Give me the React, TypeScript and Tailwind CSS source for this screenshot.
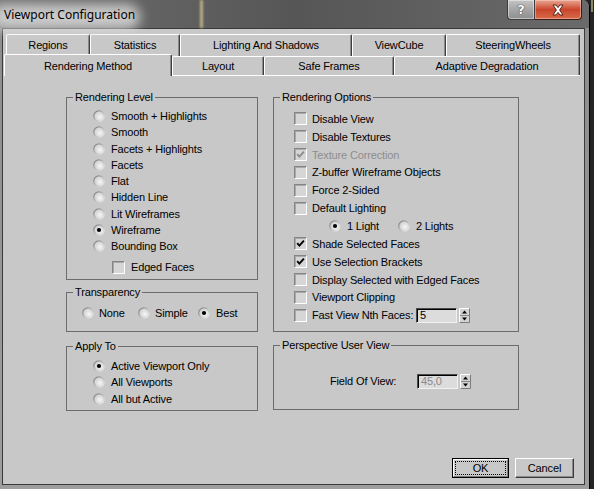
import React from 'react';

function Radio({ checked = false }: { checked?: boolean }) {
  return (
    <svg width="12" height="12" viewBox="0 0 12 12" className="shrink-0">
      <defs>
        <linearGradient id="rb" x1="0" y1="0" x2="1" y2="1">
          <stop offset="0" stopColor="#6e6e6e" />
          <stop offset="1" stopColor="#ffffff" />
        </linearGradient>
        <radialGradient id="rf" cx="0.6" cy="0.6" r="0.65">
          <stop offset="0" stopColor="#f6f6f6" />
          <stop offset="1" stopColor="#cdcdcd" />
        </radialGradient>
      </defs>
      <circle cx="6" cy="6" r="5.8" fill="url(#rb)" />
      <circle cx="6" cy="6" r="4.6" fill="url(#rf)" />
      {checked && <circle cx="6" cy="6" r="2.1" fill="#000" />}
    </svg>
  );
}

function Check({ checked = false, disabled = false }: { checked?: boolean; disabled?: boolean }) {
  return (
    <span className="w-[13px] h-[13px] shrink-0 flex items-center justify-center border border-t-[#858585] border-l-[#858585] border-b-white border-r-white bg-[#d6d6d6] shadow-[inset_1px_1px_0_#a9a9a9]">
      {checked && (
        <svg width="9" height="9" viewBox="0 0 9 9">
          <path d="M1.2 4.2 L3.4 6.6 L7.9 1.6" stroke={disabled ? '#8c8c8c' : '#000'} strokeWidth="1.9" fill="none" />
        </svg>
      )}
    </span>
  );
}

function Spinner() {
  return (
    <svg width="11" height="15" viewBox="0 0 11 15" className="shrink-0">
      <rect x="0" y="0" width="11" height="15" fill="#d2d2d2" />
      <path d="M0.5 14.5 V0.5 H10.5" stroke="#fff" fill="none" />
      <path d="M0.5 14.5 H10.5 V0.5" stroke="#7c7c7c" fill="none" />
      <path d="M1 7.5 H10" stroke="#8a8a8a" />
      <polygon points="3,5.5 8,5.5 5.5,2.5" fill="#000" />
      <polygon points="3,9.5 8,9.5 5.5,12.5" fill="#000" />
    </svg>
  );
}

function Edit({ value, disabled = false }: { value: string; disabled?: boolean }) {
  return (
    <span
      className={`w-[41px] h-[15px] shrink-0 flex items-center pl-[3px] border border-t-[#4a4a4a] border-l-[#4a4a4a] border-b-[#f2f2f2] border-r-[#f2f2f2] shadow-[inset_1px_1px_0_#000] bg-[#dcdcdc] leading-[13px] ${disabled ? 'text-[#8a8a8a]' : 'text-black'}`}
    >
      {value}
    </span>
  );
}

function Group({ title, className, children }: { title: string; className: string; children?: React.ReactNode }) {
  return (
    <div className={`relative border border-[#6c6c6c] ${className}`}>
      <span className="absolute -top-[8px] left-[6px] px-[2px] bg-[#c8c8c8] leading-[14px]">{title}</span>
      {children}
    </div>
  );
}

function RadioRow({ label, checked = false }: { label: string; checked?: boolean }) {
  return (
    <div className="flex items-center h-[16.25px] gap-[6px]">
      <Radio checked={checked} />
      <span>{label}</span>
    </div>
  );
}

function CheckRow({ label, checked = false, disabled = false }: { label: string; checked?: boolean; disabled?: boolean }) {
  return (
    <div className="flex items-center h-[17.85px] gap-[5px]">
      <Check checked={checked} disabled={disabled} />
      <span className={disabled ? 'text-[#8d8d8d]' : ''}>{label}</span>
    </div>
  );
}

export default function App() {
  return (
    <div className="relative w-[594px] h-[489px] overflow-hidden bg-[#242424] font-['Liberation_Sans',Arial,sans-serif] text-[11px] leading-[14px] tracking-[-0.15px] text-black">
      {/* background glimpse at the right edge */}
      <div className="absolute right-[1px] top-0 w-[2px] h-[12px] bg-[#b8b27a]/70" />

      <div className="w-[590px] h-[489px] flex flex-col rounded-tr-[7px] overflow-hidden border-r border-black bg-gradient-to-b from-[#8c8c8c] to-[#9e9e9e]">
        {/* Title bar */}
        <div className="relative h-[28px] shrink-0 bg-gradient-to-r from-[#707070] via-[#565656] to-[#6a6a6a]">
          <div className="absolute -left-[10px] top-[4px] w-[150px] h-[26px] rounded-full bg-[#dadada]/85 blur-[6px]" />
          <div className="absolute left-[200px] top-0 w-[3px] h-[28px] bg-[#cfc78c]/80 blur-[1px]" />
          <span className="relative block pl-[4px] pt-[6px] text-[12px] leading-[18px] tracking-normal font-['Noto_Sans','Open_Sans',sans-serif] text-black">
            Viewport Configuration
          </span>
          <div className="absolute right-[7px] top-0 flex">
            <div className="w-[28px] h-[20px] flex items-center justify-center rounded-bl-[4px] border border-t-0 border-[#3c3c3c] bg-gradient-to-b from-[#c4c4c4] via-[#a6a6a6] to-[#8e8e8e] shadow-[inset_0_0_0_1px_rgba(255,255,255,0.45)]">
              <span className="text-white font-bold text-[13px] leading-[14px] font-['DejaVu_Sans',sans-serif] [text-shadow:0_0_1px_#222,0_0_1px_#222]">?</span>
            </div>
            <div className="w-[47px] h-[20px] flex items-center justify-center rounded-br-[4px] border border-l-0 border-t-0 border-[#3c1c14] bg-gradient-to-b from-[#e8a593] via-[#c9462c] to-[#d86a48] shadow-[inset_0_0_0_1px_rgba(255,220,210,0.45)]">
              <svg width="14" height="12" viewBox="0 0 14 12">
                <path d="M2 1 H5 L7 3.6 L9 1 H12 L8.6 6 L12 11 H9 L7 8.4 L5 11 H2 L5.4 6 Z" fill="#fff" stroke="#4a1a10" strokeWidth="0.9" />
              </svg>
            </div>
          </div>
        </div>

        {/* Client area */}
        <div className="flex-1 ml-[2px] mr-[4px] mb-[4px] border border-[#3a3a3a] bg-[#c8c8c8] flex flex-col pt-[5px] pl-[3px] pr-[4px]">
          {/* Back tab row */}
          <div className="flex h-[20px] items-start">
            <div className="w-[84px] h-[22px] flex justify-center pt-[3px] rounded-t-[2px] border-t border-l border-r border-t-white border-l-white border-r-[#3e3e3e] shadow-[inset_-1px_0_0_#8a8a8a]">Regions</div>
            <div className="w-[90px] h-[22px] flex justify-center pt-[3px] rounded-t-[2px] border-t border-l border-r border-t-white border-l-white border-r-[#3e3e3e] shadow-[inset_-1px_0_0_#8a8a8a]">Statistics</div>
            <div className="w-[172px] h-[22px] flex justify-center pt-[3px] rounded-t-[2px] border-t border-l border-r border-t-white border-l-white border-r-[#3e3e3e] shadow-[inset_-1px_0_0_#8a8a8a]">Lighting And Shadows</div>
            <div className="w-[94px] h-[22px] flex justify-center pt-[3px] rounded-t-[2px] border-t border-l border-r border-t-white border-l-white border-r-[#3e3e3e] shadow-[inset_-1px_0_0_#8a8a8a]">ViewCube</div>
            <div className="w-[134px] h-[22px] flex justify-center pt-[3px] rounded-t-[2px] border-t border-l border-r border-t-white border-l-white border-r-[#3e3e3e] shadow-[inset_-1px_0_0_#8a8a8a]">SteeringWheels</div>
          </div>
          {/* Front tab row */}
          <div className="flex h-[21px] items-start">
            <div className="relative z-10 -ml-[2px] w-[168px] h-[22px] flex justify-center pt-[4px] bg-[#c8c8c8] rounded-t-[2px] border-t border-l border-r border-t-white border-l-white border-r-[#3e3e3e] shadow-[inset_-1px_0_0_#8a8a8a]">Rendering Method</div>
            <div className="mt-[2px] w-[92px] h-[19px] flex justify-center pt-[2px] bg-[#c8c8c8] rounded-t-[2px] border-t border-l border-r border-t-white border-l-white border-r-[#3e3e3e] shadow-[inset_-1px_0_0_#8a8a8a]">Layout</div>
            <div className="mt-[2px] w-[130px] h-[19px] flex justify-center pt-[2px] bg-[#c8c8c8] rounded-t-[2px] border-t border-l border-r border-t-white border-l-white border-r-[#3e3e3e] shadow-[inset_-1px_0_0_#8a8a8a]">Safe Frames</div>
            <div className="mt-[2px] w-[186px] h-[19px] flex justify-center pt-[2px] bg-[#c8c8c8] rounded-t-[2px] border-t border-l border-r border-t-white border-l-white border-r-[#3e3e3e] shadow-[inset_-1px_0_0_#8a8a8a]">Adaptive Degradation</div>
          </div>

          {/* Tab page */}
          <div className="flex-1 flex flex-col border-t border-white pt-[21px] pl-[60px]">
            <div className="flex gap-[15px]">
              {/* Left column */}
              <div className="w-[192px] flex flex-col">
                <Group title="Rendering Level" className="h-[183px] pt-[10px] pl-[26px]">
                  <RadioRow label="Smooth + Highlights" />
                  <RadioRow label="Smooth" />
                  <RadioRow label="Facets + Highlights" />
                  <RadioRow label="Facets" />
                  <RadioRow label="Flat" />
                  <RadioRow label="Hidden Line" />
                  <RadioRow label="Lit Wireframes" />
                  <RadioRow label="Wireframe" checked />
                  <RadioRow label="Bounding Box" />
                  <div className="flex items-center h-[16px] mt-[5px] ml-[19px] gap-[6px]">
                    <Check />
                    <span>Edged Faces</span>
                  </div>
                </Group>

                <Group title="Transparency" className="mt-[12px] h-[40px] pt-[12px] pl-[15px]">
                  <div className="flex items-center h-[16px]">
                    <div className="w-[56px] flex items-center gap-[5px]">
                      <Radio />
                      <span>None</span>
                    </div>
                    <div className="w-[60px] flex items-center gap-[5px]">
                      <Radio />
                      <span>Simple</span>
                    </div>
                    <div className="flex items-center gap-[6px]">
                      <Radio checked />
                      <span>Best</span>
                    </div>
                  </div>
                </Group>

                <Group title="Apply To" className="mt-[14px] h-[65px] pt-[11px] pl-[26px]">
                  <RadioRow label="Active Viewport Only" checked />
                  <RadioRow label="All Viewports" />
                  <RadioRow label="All but Active" />
                </Group>
              </div>

              {/* Right column */}
              <div className="w-[246px] flex flex-col">
                <Group title="Rendering Options" className="h-[235px] pt-[12px] pl-[20px]">
                  <CheckRow label="Disable View" />
                  <CheckRow label="Disable Textures" />
                  <CheckRow label="Texture Correction" checked disabled />
                  <CheckRow label="Z-buffer Wireframe Objects" />
                  <CheckRow label="Force 2-Sided" />
                  <CheckRow label="Default Lighting" />
                  <div className="flex items-center h-[17.85px] pl-[35px]">
                    <div className="w-[69px] flex items-center gap-[6px]">
                      <Radio checked />
                      <span>1 Light</span>
                    </div>
                    <div className="flex items-center gap-[6px]">
                      <Radio />
                      <span>2 Lights</span>
                    </div>
                  </div>
                  <CheckRow label="Shade Selected Faces" checked />
                  <CheckRow label="Use Selection Brackets" checked />
                  <CheckRow label="Display Selected with Edged Faces" />
                  <CheckRow label="Viewport Clipping" />
                  <div className="flex items-center h-[17.85px] gap-[5px]">
                    <Check />
                    <span className="w-[99px] whitespace-nowrap">Fast View Nth Faces:</span>
                    <Edit value="5" />
                    <span className="ml-[-3px]"><Spinner /></span>
                  </div>
                </Group>

                <Group title="Perspective User View" className="mt-[13px] h-[65px] pt-[27px] pl-[56px]">
                  <div className="flex items-center h-[16px]">
                    <span className="w-[87px]">Field Of View:</span>
                    <Edit value="45,0" disabled />
                    <span className="ml-[2px]"><Spinner /></span>
                  </div>
                </Group>
              </div>
            </div>

            {/* Dialog buttons */}
            <div className="flex justify-end gap-[6px] mt-[47px] pr-[6px]">
              <div className="w-[57px] h-[20px] border border-black">
                <div className="h-full p-[1px] border border-t-white border-l-white border-b-[#7c7c7c] border-r-[#7c7c7c] bg-[#c8c8c8]">
                  <div className="h-full flex items-center justify-center border border-dotted border-black">OK</div>
                </div>
              </div>
              <div className="w-[59px] h-[20px] flex items-center justify-center border border-t-white border-l-white border-b-[#3c3c3c] border-r-[#3c3c3c] shadow-[inset_-1px_-1px_0_#8a8a8a] bg-[#c8c8c8]">
                Cancel
              </div>
            </div>
          </div>
        </div>
      </div>
    </div>
  );
}
